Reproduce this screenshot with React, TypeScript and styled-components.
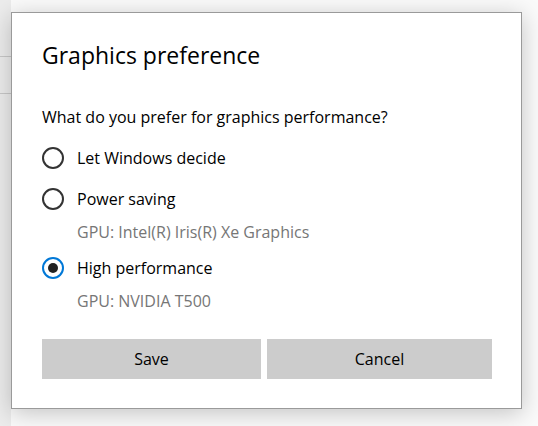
import styled, { createGlobalStyle } from 'styled-components';

const GlobalStyle = createGlobalStyle`
  html, body {
    margin: 0;
    padding: 0;
    background: #ffffff;
  }
  body {
    font-family: 'Open Sans', 'Noto Sans', 'Liberation Sans', sans-serif;
    color: #000;
  }
`;

const Page = styled.div`
  position: relative;
  width: 538px;
  height: 426px;
  overflow: hidden;
  background: #fafafa;
`;

const BackPane = styled.div`
  width: 11px;
  height: 100%;
  background: #ececec;
  display: flex;
  flex-direction: column;
`;

const BackLine = styled.div<{ $top: number }>`
  margin-top: ${({ $top }) => $top}px;
  height: 1px;
  background: #c8c8c8;
`;

const Dialog = styled.div`
  position: absolute;
  left: 11px;
  top: 12px;
  width: 511px;
  height: 397px;
  box-sizing: border-box;
  background: #fff;
  border: 1px solid #9a9a9a;
  box-shadow: 0 4px 22px rgba(0, 0, 0, 0.22);
  padding: 26px 29px 0 30px;
  display: flex;
  flex-direction: column;
`;

const Title = styled.h1`
  margin: 0;
  font-size: 23px;
  font-weight: 400;
  line-height: 32px;
`;

const Question = styled.p`
  margin: 35px 0 0;
  font-size: 16px;
  line-height: 22px;
`;

const Options = styled.div`
  display: flex;
  flex-direction: column;
  margin-top: 14px;
`;

const Option = styled.label`
  display: flex;
  flex-direction: column;
  margin-bottom: 9px;
`;

const OptionRow = styled.div`
  display: flex;
  align-items: center;
  gap: 13px;
  height: 32px;
`;

const Radio = styled.span<{ $checked?: boolean }>`
  width: 22px;
  height: 22px;
  box-sizing: border-box;
  border-radius: 50%;
  border: 2px solid ${({ $checked }) => ($checked ? '#0078d7' : '#333')};
  display: flex;
  align-items: center;
  justify-content: center;
  flex-shrink: 0;

  &::after {
    content: '';
    width: 10px;
    height: 10px;
    border-radius: 50%;
    background: #222;
    display: ${({ $checked }) => ($checked ? 'block' : 'none')};
  }
`;

const OptionLabel = styled.span`
  font-size: 16px;
  line-height: 22px;
`;

const Detail = styled.span`
  margin-left: 35px;
  margin-top: 6px;
  font-size: 16px;
  line-height: 22px;
  color: #767676;
`;

const Buttons = styled.div`
  display: grid;
  grid-template-columns: 219px 225px;
  gap: 6px;
  margin-top: 18px;
`;

const Button = styled.button`
  height: 40px;
  border: none;
  background: #cccccc;
  font-family: inherit;
  font-size: 16px;
  color: #000;
  padding: 0;
`;

const options = [
  { label: 'Let Windows decide' },
  { label: 'Power saving', detail: 'GPU: Intel(R) Iris(R) Xe Graphics' },
  { label: 'High performance', detail: 'GPU: NVIDIA T500', checked: true },
];

export default function App() {
  return (
    <Page>
      <GlobalStyle />
      <BackPane>
        <BackLine $top={56} />
        <BackLine $top={36} />
      </BackPane>
      <Dialog>
        <Title>Graphics preference</Title>
        <Question>What do you prefer for graphics performance?</Question>
        <Options>
          {options.map((o) => (
            <Option key={o.label}>
              <OptionRow>
                <Radio $checked={o.checked} />
                <OptionLabel>{o.label}</OptionLabel>
              </OptionRow>
              {o.detail && <Detail>{o.detail}</Detail>}
            </Option>
          ))}
        </Options>
        <Buttons>
          <Button>Save</Button>
          <Button>Cancel</Button>
        </Buttons>
      </Dialog>
    </Page>
  );
}
